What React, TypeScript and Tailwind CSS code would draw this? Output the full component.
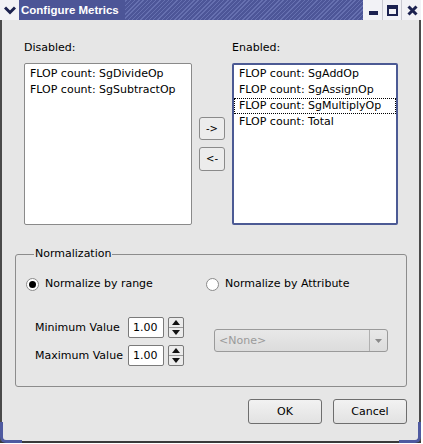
import { useState } from 'react';

const disabledItems = ['FLOP count: SgDivideOp', 'FLOP count: SgSubtractOp'];
const enabledItems = ['FLOP count: SgAddOp', 'FLOP count: SgAssignOp', 'FLOP count: SgMultiplyOp', 'FLOP count: Total'];

function Spinner({ value }: { value: string }) {
    return (
        <div className="flex items-center gap-[4px]">
            <div className="w-[36px] h-[21px] bg-white border border-[#7a7a7a] rounded-[2px] flex items-center pl-[4px]">{value}</div>
            <div className="w-[16px] h-[21px] flex flex-col border border-[#7a7a7a] rounded-[2px] bg-[#ececec]">
                <div className="flex-1 flex items-center justify-center border-b border-[#9a9a9a]">
                    <svg width="8" height="5" viewBox="0 0 8 5"><path d="M0 5 L4 0 L8 5 Z" fill="#111" /></svg>
                </div>
                <div className="flex-1 flex items-center justify-center">
                    <svg width="8" height="5" viewBox="0 0 8 5"><path d="M0 0 L4 5 L8 0 Z" fill="#111" /></svg>
                </div>
            </div>
        </div>
    );
}

function Radio({ checked }: { checked: boolean }) {
    return (
        <span className="w-[13px] h-[13px] rounded-full border border-[#8a8a8a] bg-white flex items-center justify-center">
            {checked && <span className="w-[7px] h-[7px] rounded-full bg-black" />}
        </span>
    );
}

export default function App() {
    const [byRange, setByRange] = useState(true);

    return (
        <div className="w-[423px] h-[444px] bg-white font-['DejaVu_Sans',sans-serif] text-[11px] text-black leading-[14px]">
            <div className="w-[421px] h-[443px] flex flex-col border-b-2 border-[#3a3a3a] relative">
                {/* title bar */}
                <div className="h-[20px] flex items-center bg-[repeating-linear-gradient(135deg,#4d5698_0px,#4d5698_2px,#6670b0_2px,#6670b0_3px)]">
                    <div className="w-[19px] h-[20px] bg-[#f2f2f6] flex items-center justify-center">
                        <svg width="12" height="9" viewBox="0 0 12 9"><path d="M1 1.5 L6 6.5 L11 1.5" stroke="#1c2250" strokeWidth="3" fill="none" /></svg>
                    </div>
                    <div className="h-[20px] bg-[#4c5597] pl-[2px] pr-[6px] flex items-center text-white font-bold text-[11.5px] font-['Liberation_Sans',sans-serif]">Configure Metrics</div>
                    <div className="flex-1" />
                    <div className="h-[20px] flex bg-[#f2f2f6] pl-[2px] gap-[1px]">
                        <div className="w-[18px] flex items-center justify-center border-r border-[#c8c8d0]">
                            <div className="w-[9px] h-[4px] mt-[6px] bg-[#1c2250]" />
                        </div>
                        <div className="w-[18px] flex items-center justify-center border-r border-[#c8c8d0]">
                            <div className="w-[11px] h-[11px] border-[2px] border-t-[4px] border-[#1c2250]" />
                        </div>
                        <div className="w-[18px] flex items-center justify-center">
                            <svg width="11" height="11" viewBox="0 0 11 11"><path d="M1.5 1.5 L9.5 9.5 M9.5 1.5 L1.5 9.5" stroke="#1c2250" strokeWidth="3" /></svg>
                        </div>
                    </div>
                </div>

                {/* body */}
                <div className="flex-1 bg-[#e6e6e6] border-l-2 border-r-2 border-[#4a4a4a] flex flex-col">
                    <div className="flex mt-[21px] pl-[22px]">
                        <div className="flex flex-col w-[168px]">
                            <span>Disabled:</span>
                            <div className="mt-[8px] h-[162px] bg-white border border-[#8a8a8a] rounded-[2px] px-[1px] pt-[2px]">
                                {disabledItems.map((item) => (
                                    <div key={item} className="h-[16px] px-[4px] flex items-center">{item}</div>
                                ))}
                            </div>
                        </div>
                        <div className="w-[40px] flex flex-col items-center justify-center gap-[7px] pt-[22px]">
                            <button className="w-[26px] h-[23px] border border-[#8a8a8a] rounded-[3px] bg-[#ececec] text-[10px]">-&gt;</button>
                            <button className="w-[26px] h-[24px] border border-[#8a8a8a] rounded-[3px] bg-[#ececec] text-[10px]">&lt;-</button>
                        </div>
                        <div className="flex flex-col w-[166px]">
                            <span>Enabled:</span>
                            <div className="mt-[8px] h-[162px] bg-white border-2 border-[#4c5a94] rounded-[2px] pt-[1px]">
                                {enabledItems.map((item, i) => (
                                    <div key={item} className={`h-[16px] px-[4px] flex items-center ${i === 2 ? 'border border-dotted border-black' : 'border border-transparent'}`}>{item}</div>
                                ))}
                            </div>
                        </div>
                    </div>

                    <fieldset className="mt-[22px] ml-[13px] w-[392px] h-[140px] border border-[#8c8c8c] rounded-[3px] px-[10px]">
                        <legend className="ml-[8px] px-[1px] text-[11px]">Normalization</legend>
                        <div className="flex items-center mt-[16px]">
                            <label className="flex items-center gap-[6px] w-[180px]" onClick={() => setByRange(true)}>
                                <Radio checked={byRange} /> Normalize by range
                            </label>
                            <label className="flex items-center gap-[6px]" onClick={() => setByRange(false)}>
                                <Radio checked={!byRange} /> Normalize by Attribute
                            </label>
                        </div>
                        <div className="flex mt-[26px]">
                            <div className="flex flex-col gap-[7px] pl-[9px] w-[188px]">
                                <div className="flex items-center">
                                    <span className="w-[93px] whitespace-nowrap">Minimum Value</span>
                                    <Spinner value="1.00" />
                                </div>
                                <div className="flex items-center">
                                    <span className="w-[93px] whitespace-nowrap">Maximum Value</span>
                                    <Spinner value="1.00" />
                                </div>
                            </div>
                            <div className="mt-[12px] w-[174px] h-[23px] border border-[#9a9a9a] rounded-[3px] bg-[linear-gradient(#e8e8e8,#dcdcdc)] flex">
                                <span className="flex-1 flex items-center pl-[4px] text-[#9a9a9a]">&lt;None&gt;</span>
                                <span className="w-[18px] border-l border-[#b0b0b0] flex items-center justify-center">
                                    <svg width="7" height="4" viewBox="0 0 7 4"><path d="M0 0 L3.5 4 L7 0 Z" fill="#8a8a8a" /></svg>
                                </span>
                            </div>
                        </div>
                    </fieldset>

                    <div className="flex justify-end gap-[11px] mt-[12px] pr-[12px]">
                        <button className="w-[74px] h-[25px] border border-[#6e6e6e] rounded-[3px] bg-[linear-gradient(#f2f2f2,#e2e2e2)]">OK</button>
                        <button className="w-[74px] h-[25px] border border-[#6e6e6e] rounded-[3px] bg-[linear-gradient(#f2f2f2,#e2e2e2)]">Cancel</button>
                    </div>
                </div>
                {/* blue frame corners */}
                <div className="absolute left-0 bottom-[-2px] w-[22px] h-[21px] border-l-[3px] border-b-[3px] border-[#4f5aa0] rounded-bl-[6px]" />
                <div className="absolute right-0 bottom-[-2px] w-[22px] h-[21px] border-r-[3px] border-b-[3px] border-[#4f5aa0] rounded-br-[6px]" />
            </div>
        </div>
    );
}
